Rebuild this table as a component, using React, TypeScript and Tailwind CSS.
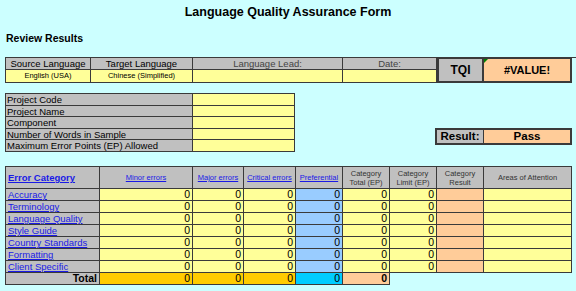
const rows = [
  "Accuracy",
  "Terminology",
  "Language Quality",
  "Style Guide",
  "Country Standards",
  "Formatting",
  "Client Specific",
];

const b = "border-r border-b border-[#3a3a3a]";

export default function App() {
  return (
    <div className="w-[576px] h-[291px] bg-[#ccffff] font-['Liberation_Sans',Arial,sans-serif] text-black overflow-hidden">
      <h1 className="pt-[4px] text-center text-[12.5px] font-bold leading-[16px]">Language Quality Assurance Form</h1>
      <h2 className="mt-[11px] ml-[6px] text-[10.5px] font-bold leading-[14px]">Review Results</h2>

      {/* language / TQI strip */}
      <div className="mt-[12px] ml-[5px] grid grid-cols-[86px_102px_150px_94px_47px_88px] grid-rows-[12px_13px] border-t border-[#3a3a3a] text-center">
        <div className={`${b} border-l bg-[#c0c0c0] text-[9.5px] leading-[11px]`}>Source Language</div>
        <div className={`${b} bg-[#c0c0c0] text-[9.5px] leading-[11px]`}>Target Language</div>
        <div className={`${b} bg-[#c0c0c0] text-[9.5px] leading-[11px] text-[#444]`}>Language Lead:</div>
        <div className={`${b} bg-[#c0c0c0] text-[9.5px] leading-[11px] text-[#444]`}>Date:</div>
        <div className="row-span-2 border-2 border-[#3a3a3a] border-t-[1px] bg-[#c0c0c0] flex items-center justify-center text-[12px] font-bold">TQI</div>
        <div className="row-span-2 relative border-2 border-l-0 border-[#3a3a3a] border-t-[1px] bg-[#ffcc99] flex items-center justify-center text-[11px] font-bold">
          <span className="absolute left-0 top-0 w-0 h-0 border-t-[4px] border-r-[4px] border-t-[#008000] border-r-transparent" />
          #VALUE!
        </div>
        <div className={`${b} border-l bg-[#ffff99] text-[7.5px] leading-[12px]`}>English (USA)</div>
        <div className={`${b} bg-[#ffff99] text-[7.5px] leading-[12px]`}>Chinese (Simplified)</div>
        <div className={`${b} bg-[#ffff99]`} />
        <div className={`${b} bg-[#ffff99]`} />
      </div>

      {/* project info + result */}
      <div className="mt-[10px] ml-[5px] flex items-start">
        <div className="grid grid-cols-[188px_102px] grid-rows-[12px_11px_12px_11px_12px] border-t border-[#3a3a3a] text-[9.5px] leading-[11px]">
          {["Project Code", "Project Name", "Component", "Number of Words in Sample", "Maximum Error Points (EP) Allowed"].map((l) => (
            <div key={l} className="contents">
              <div className={`${b} border-l bg-[#c0c0c0] pl-[1px] flex items-center`}>{l}</div>
              <div className={`${b} bg-[#ffff99]`} />
            </div>
          ))}
        </div>
        <div className="mt-[35px] ml-[140px] flex h-[17px] border-2 border-[#3a3a3a] text-[11.5px] font-bold">
          <div className="w-[47px] bg-[#c0c0c0] border-r border-[#3a3a3a] flex items-center justify-center">Result:</div>
          <div className="w-[86px] bg-[#ffcc99] flex items-center justify-center">Pass</div>
        </div>
      </div>

      {/* error table */}
      <div className="mt-[14px] ml-[5px] grid grid-cols-[95px_93px_51px_52px_47px_47px_47px_47px_88px] grid-rows-[23px_repeat(8,12px)] text-[10.5px] leading-[11px]">
        <div className={`${b} border-l border-t bg-[#c0c0c0] pl-[2px] flex items-center text-[9.5px] font-bold text-[#1a1ae6] underline`}>Error Category</div>
        {["Minor errors", "Major errors", "Critical errors", "Preferential"].map((h) => (
          <div key={h} className={`${b} border-t bg-[#c0c0c0] flex items-center justify-center text-[7.5px] text-[#1a1ae6] underline`}>{h}</div>
        ))}
        {["Category Total (EP)", "Category Limit (EP)"].map((h) => (
          <div key={h} className={`${b} border-t bg-[#c0c0c0] flex items-center justify-center text-center text-[7.5px] leading-[9px] text-[#333] px-[3px]`}>{h}</div>
        ))}
        <div className={`${b} border-t bg-[#c0c0c0] flex items-center justify-center text-center text-[7.5px] leading-[9px] text-[#333] px-[8px]`}>Category Result</div>
        <div className={`${b} border-t bg-[#c0c0c0] flex items-center justify-center text-[7.5px] text-[#333]`}>Areas of Attention</div>

        {rows.map((r) => (
          <div key={r} className="contents">
            <div className={`${b} border-l bg-[#c0c0c0] pl-[2px] flex items-end text-[9.5px] leading-[10px] text-[#1a1ae6] underline whitespace-nowrap`}>{r}</div>
            <div className={`${b} bg-[#ffff99] text-right pr-[2px]`}>0</div>
            <div className={`${b} bg-[#ffff99] text-right pr-[2px]`}>0</div>
            <div className={`${b} bg-[#ffff99] text-right pr-[2px]`}>0</div>
            <div className={`${b} bg-[#99ccff] text-right pr-[2px]`}>0</div>
            <div className={`${b} bg-[#ffff99] text-right pr-[2px]`}>0</div>
            <div className={`${b} bg-[#ffff99] text-right pr-[2px]`}>0</div>
            <div className={`${b} bg-[#ffcc99]`} />
            <div className={`${b} bg-[#ffff99]`} />
          </div>
        ))}

        <div className={`${b} border-l bg-[#c0c0c0] text-right pr-[2px] font-bold`}>Total</div>
        <div className={`${b} bg-[#ffcc00] text-right pr-[2px]`}>0</div>
        <div className={`${b} bg-[#ffcc00] text-right pr-[2px]`}>0</div>
        <div className={`${b} bg-[#ffcc00] text-right pr-[2px]`}>0</div>
        <div className={`${b} bg-[#00ccff] text-right pr-[2px]`}>0</div>
        <div className={`${b} bg-[#ffcc99] text-right pr-[2px] font-bold`}>0</div>
      </div>
    </div>
  );
}
